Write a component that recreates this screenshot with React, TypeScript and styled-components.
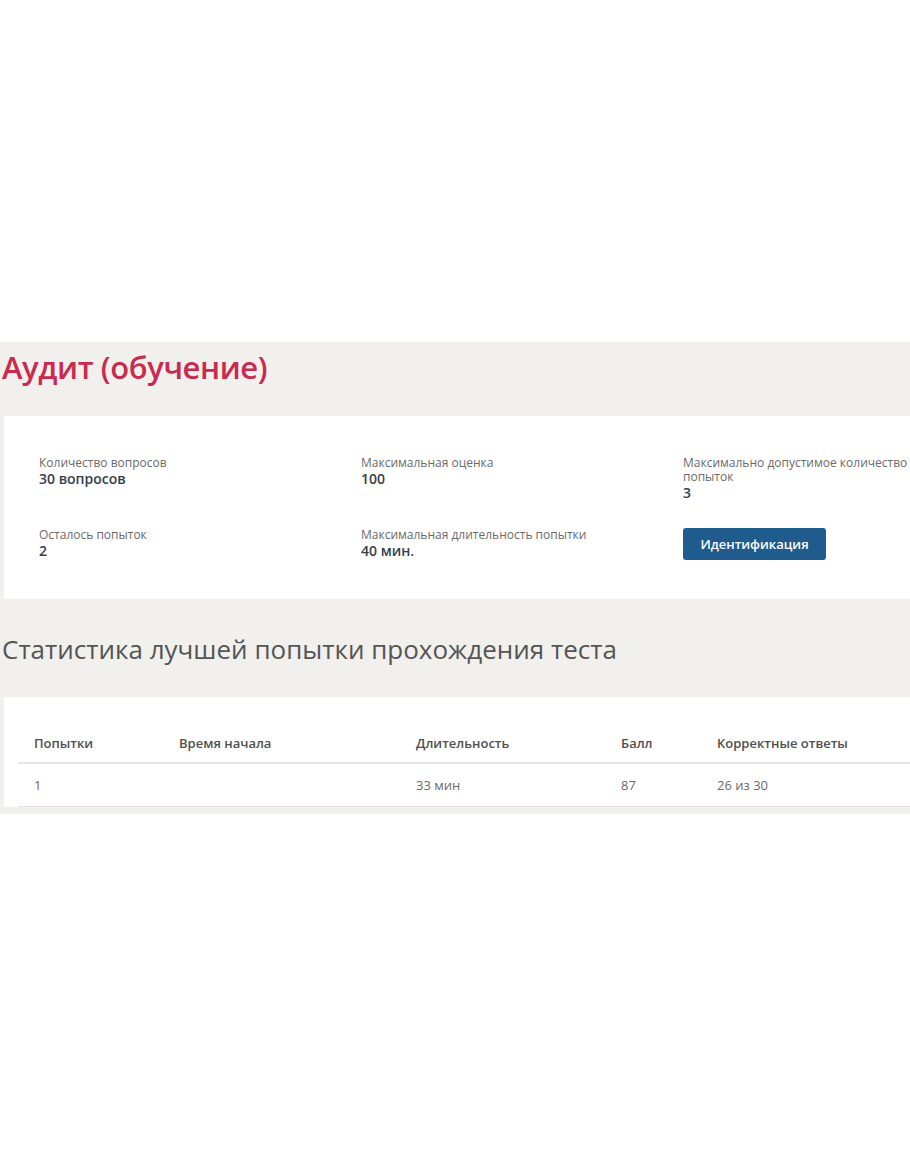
import styled, { createGlobalStyle } from "styled-components";

const GlobalStyle = createGlobalStyle`
  body {
    margin: 0;
    background: #ffffff;
    font-family: "Open Sans", "Noto Sans", sans-serif;
  }
`;

const Page = styled.div`
  width: 910px;
  height: 1155px;
  padding-top: 342px;
  box-sizing: border-box;
`;

const Shell = styled.div`
  background: #f1f0ed;
  padding-bottom: 7px;
`;

const PageTitle = styled.h1`
  margin: 0;
  height: 74px;
  padding: 4px 0 0 2px;
  box-sizing: border-box;
  font-size: 31px;
  line-height: 42px;
  font-weight: 600;
  color: #c92a4f;
  letter-spacing: -0.4px;
`;

const Card = styled.div`
  margin-left: 4px;
  background: #ffffff;
`;

const InfoGrid = styled.div`
  display: grid;
  grid-template-columns: 322px 322px 1fr;
  row-gap: 26px;
  padding: 40px 0 39px 35px;
`;

const InfoItem = styled.div`
  display: flex;
  flex-direction: column;
  align-items: flex-start;
`;

const InfoLabel = styled.span`
  font-size: 12px;
  line-height: 14px;
  color: #6a6a6a;
`;

const InfoValue = styled.span`
  font-size: 14px;
  line-height: 18px;
  font-weight: 600;
  color: #34404c;
`;

const Button = styled.button`
  height: 32px;
  width: 143px;
  border: none;
  border-radius: 3px;
  background: #1f5b8d;
  color: #ffffff;
  font-family: inherit;
  font-size: 13px;
  font-weight: 600;
  cursor: pointer;
`;

const SectionTitle = styled.h2`
  margin: 0;
  height: 98px;
  padding: 30px 0 0 2px;
  box-sizing: border-box;
  font-size: 26px;
  line-height: 40px;
  font-weight: 400;
  color: #555555;
`;

const TableWrap = styled.div`
  padding: 26px 0 0 14px;
`;

const Table = styled.table`
  width: 100%;
  border-collapse: collapse;
  font-size: 13px;
`;

const Th = styled.th<{ $w?: number }>`
  width: ${(p) => (p.$w ? `${p.$w}px` : "auto")};
  height: 40px;
  padding: 0 16px;
  text-align: left;
  font-weight: 600;
  color: #4f4f4f;
  border-bottom: 2px solid #e6e6e6;
  box-sizing: border-box;
`;

const Td = styled.td`
  height: 42px;
  padding: 0 16px;
  color: #6a6a6a;
  border-bottom: 1px solid #e3e3e3;
`;

const info = [
  { label: "Количество вопросов", value: "30 вопросов" },
  { label: "Максимальная оценка", value: "100" },
  { label: "Максимально допустимое количество попыток", value: "3" },
  { label: "Осталось попыток", value: "2" },
  { label: "Максимальная длительность попытки", value: "40 мин." },
];

const columns = [
  { title: "Попытки", w: 145 },
  { title: "Время начала", w: 237 },
  { title: "Длительность", w: 205 },
  { title: "Балл", w: 96 },
  { title: "Корректные ответы" },
];

const rows = [["1", "", "33 мин", "87", "26 из 30"]];

export default function App() {
  return (
    <Page>
      <GlobalStyle />
      <Shell>
        <PageTitle>Аудит (обучение)</PageTitle>
        <Card>
          <InfoGrid>
            {info.map((item) => (
              <InfoItem key={item.label}>
                <InfoLabel>{item.label}</InfoLabel>
                <InfoValue>{item.value}</InfoValue>
              </InfoItem>
            ))}
            <InfoItem>
              <Button>Идентификация</Button>
            </InfoItem>
          </InfoGrid>
        </Card>
        <SectionTitle>Статистика лучшей попытки прохождения теста</SectionTitle>
        <Card>
          <TableWrap>
            <Table>
              <thead>
                <tr>
                  {columns.map((c) => (
                    <Th key={c.title} $w={c.w}>
                      {c.title}
                    </Th>
                  ))}
                </tr>
              </thead>
              <tbody>
                {rows.map((r, i) => (
                  <tr key={i}>
                    {r.map((cell, j) => (
                      <Td key={j}>{cell}</Td>
                    ))}
                  </tr>
                ))}
              </tbody>
            </Table>
          </TableWrap>
        </Card>
      </Shell>
    </Page>
  );
}
